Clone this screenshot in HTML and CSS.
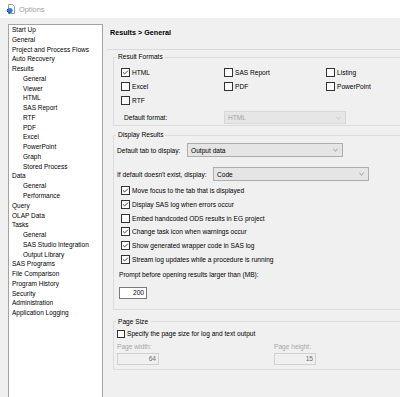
FILE: index.html
```html
<!DOCTYPE html>
<html>
<head>
<meta charset="utf-8">
<title>Options</title>
<link rel="stylesheet" href="styles.css">
</head>
<body>
<div class="titlebar">
  <svg class="app-icon" width="10" height="10" viewBox="0 0 10 10">
    <path d="M2.5 0.5 H6.5 L8.5 2.5 V9.5 H2.5 Z" fill="#fff" stroke="#8a9bb5" stroke-width="1"/>
    <circle cx="4" cy="6.5" r="2.6" fill="#2c7fd6"/>
    <path d="M1.6 5.2 A2.6 2.6 0 0 0 4 9.1" fill="none" stroke="#0d3e7a" stroke-width="1"/>
  </svg>
  <span class="title">Options</span>
</div>
<div class="main">
  <ul class="tree">
    <li>Start Up</li>
    <li>General</li>
    <li>Project and Process Flows</li>
    <li>Auto Recovery</li>
    <li>Results</li>
    <li class="sub">General</li>
    <li class="sub">Viewer</li>
    <li class="sub">HTML</li>
    <li class="sub">SAS Report</li>
    <li class="sub">RTF</li>
    <li class="sub">PDF</li>
    <li class="sub">Excel</li>
    <li class="sub">PowerPoint</li>
    <li class="sub">Graph</li>
    <li class="sub">Stored Process</li>
    <li>Data</li>
    <li class="sub">General</li>
    <li class="sub">Performance</li>
    <li>Query</li>
    <li>OLAP Data</li>
    <li>Tasks</li>
    <li class="sub">General</li>
    <li class="sub">SAS Studio Integration</li>
    <li class="sub">Output Library</li>
    <li>SAS Programs</li>
    <li>File Comparison</li>
    <li>Program History</li>
    <li>Security</li>
    <li>Administration</li>
    <li>Application Logging</li>
  </ul>

  <div class="content">
    <div class="page-title">Results &gt; General</div>
    <div class="sep"></div>

    <fieldset class="group">
      <legend>Result Formats</legend>
      <div class="fmt-grid">
        <div class="chk"><span class="box"><svg viewBox="0 0 9 9"><polyline points="1.3,4.3 3.4,6.4 7.6,2.2"/></svg></span>HTML</div>
        <div class="chk"><span class="box"></span>SAS Report</div>
        <div class="chk"><span class="box"></span>Listing</div>
        <div class="chk"><span class="box"></span>Excel</div>
        <div class="chk"><span class="box"></span>PDF</div>
        <div class="chk"><span class="box"></span>PowerPoint</div>
        <div class="chk"><span class="box"></span>RTF</div>
      </div>
      <div class="default-row">
        <span class="fmt-label">Default format:</span>
        <div class="combo disabled fmt-combo"><span>HTML</span><svg class="chev" viewBox="0 0 6 4"><polyline points="0.5,0.8 3,3.2 5.5,0.8"/></svg></div>
      </div>
    </fieldset>

    <fieldset class="group display">
      <legend>Display Results</legend>
      <div class="inner">
        <div class="combo-row first">
          <span class="row-label w70">Default tab to display:</span>
          <div class="combo"><span>Output data</span><svg class="chev" viewBox="0 0 6 4"><polyline points="0.5,0.8 3,3.2 5.5,0.8"/></svg></div>
        </div>
        <div class="combo-row second">
          <span class="row-label w96">If default doesn't exist, display:</span>
          <div class="combo"><span>Code</span><svg class="chev" viewBox="0 0 6 4"><polyline points="0.5,0.8 3,3.2 5.5,0.8"/></svg></div>
        </div>
        <div class="chk-list">
          <div class="chk"><span class="box"><svg viewBox="0 0 9 9"><polyline points="1.3,4.3 3.4,6.4 7.6,2.2"/></svg></span>Move focus to the tab that is displayed</div>
          <div class="chk"><span class="box"><svg viewBox="0 0 9 9"><polyline points="1.3,4.3 3.4,6.4 7.6,2.2"/></svg></span>Display SAS log when errors occur</div>
          <div class="chk"><span class="box"></span>Embed handcoded ODS results in EG project</div>
          <div class="chk"><span class="box"><svg viewBox="0 0 9 9"><polyline points="1.3,4.3 3.4,6.4 7.6,2.2"/></svg></span>Change task icon when warnings occur</div>
          <div class="chk"><span class="box"><svg viewBox="0 0 9 9"><polyline points="1.3,4.3 3.4,6.4 7.6,2.2"/></svg></span>Show generated wrapper code in SAS log</div>
          <div class="chk"><span class="box"><svg viewBox="0 0 9 9"><polyline points="1.3,4.3 3.4,6.4 7.6,2.2"/></svg></span>Stream log updates while a procedure is running</div>
        </div>
        <div class="prompt-label">Prompt before opening results larger than (MB):</div>
        <div class="num-input">200</div>
      </div>
    </fieldset>

    <fieldset class="group pagesize">
      <legend>Page Size</legend>
      <div class="inner">
        <div class="chk"><span class="box"></span>Specify the page size for log and text output</div>
        <div class="size-row">
          <div class="size-field">
            <span class="dim-label">Page width:</span>
            <div class="num-input disabled">64</div>
          </div>
          <div class="size-field">
            <span class="dim-label">Page height:</span>
            <div class="num-input disabled">15</div>
          </div>
        </div>
      </div>
    </fieldset>
  </div>
</div>
</body>
</html>
```

FILE: styles.css
```css
* { box-sizing: border-box; }
html, body { margin: 0; padding: 0; }
body {
  width: 400px;
  height: 397px;
  overflow: hidden;
  background: #f0f0f0;
  font-family: "Liberation Sans", Arial, sans-serif;
  font-size: 6.6px;
  color: #000;
}

.titlebar {
  height: 18px;
  background: #fff;
  display: flex;
  align-items: center;
  padding-left: 6px;
  gap: 3px;
}
.app-icon { display: block; }
.title { color: #9c9c9c; font-size: 7.4px; }

.main {
  display: flex;
  padding: 6px 0 0 8px;
  height: 379px;
  overflow: hidden;
}

.tree {
  list-style: none;
  margin: 0;
  padding: 0 0 0 3px;
  width: 95px;
  height: 400px;
  flex: none;
  background: #fff;
  border: 1px solid #a3a3a3;
  font-size: 6.5px;
  line-height: 9.76px;
  white-space: nowrap;
}
.tree .sub { padding-left: 11px; }

.content {
  margin-left: 4px;
  width: 360px;
  flex: none;
}
.page-title {
  margin-top: 4px;
  padding-left: 3px;
  line-height: 10px;
  font-weight: bold;
  font-size: 7.2px;
}
.sep {
  margin-top: 11px;
  height: 1px;
  background: #d9d9d9;
}

.group {
  margin: 2px 0 0 6px;
  padding: 0;
  width: 340px;
  border: 1px solid #dcdcdc;
  min-width: 0;
}
.group legend {
  margin-left: 2px;
  padding: 0 2px;
  line-height: 10px;
}

.chk {
  display: flex;
  align-items: center;
  white-space: nowrap;
}
.box {
  width: 9px;
  height: 9px;
  border: 1px solid #333;
  background: #fff;
  margin-right: 2px;
  flex: none;
  display: flex;
}
.box svg { width: 7px; height: 7px; }
.box polyline { fill: none; stroke: #222; stroke-width: 1.1; }

.fmt-grid {
  display: grid;
  grid-template-columns: 103px 102px 80px;
  grid-auto-rows: 14px;
  padding: 3px 0 0 7px;
}
.default-row {
  display: flex;
  align-items: center;
  margin-top: 4px;
  padding: 0 0 1px 10px;
}
.fmt-label { width: 100px; flex: none; }

.combo {
  width: 156px;
  height: 14px;
  flex: none;
  background: #e5e5e5;
  border: 1px solid #adadad;
  display: flex;
  align-items: center;
  justify-content: space-between;
  padding: 0 4px 0 3px;
}
.combo.disabled {
  background: #e6e6e6;
  border-color: #d6d6d6;
  color: #a2a2a2;
}
.combo.fmt-combo { width: 122px; height: 13px; }
.chev { width: 5px; height: 4px; }
.chev polyline { fill: none; stroke: #666; stroke-width: 0.8; }
.combo.disabled .chev polyline { stroke: #b0b0b0; }

.display { margin-top: 4px; }
.inner { padding-left: 3px; }
.combo-row { display: flex; align-items: center; }
.combo-row.first { margin-top: 3px; }
.combo-row.second { margin-top: 10px; }
.row-label { flex: none; }
.w70 { width: 70px; }
.w96 { width: 96px; }

.chk-list {
  margin-top: 3px;
  padding-left: 4px;
  display: grid;
  grid-auto-rows: 13.65px;
}
.prompt-label {
  margin-top: 4px;
  line-height: 10px;
  padding-left: 2px;
}
.num-input {
  width: 28px;
  height: 12px;
  margin: 7px 0 10px 2px;
  background: #fff;
  border: 1px solid #7a7a7a;
  text-align: right;
  padding-right: 2px;
  line-height: 10px;
}

.pagesize { margin-top: 7px; }
.pagesize .chk { height: 12px; margin-top: 1px; }
.pagesize .box { width: 8px; height: 8px; }
.size-row {
  display: flex;
  padding-bottom: 4px;
}
.size-field { width: 157px; flex: none; display: flex; flex-direction: column; }
.dim-label { color: #a6a6a6; line-height: 9px; margin-top: 2px; }
.num-input.disabled {
  width: 42px;
  margin: 2px 0 0 0;
  background: #f0f0f0;
  border-color: #d0d0d0;
  color: #6d6d6d;
}
```
